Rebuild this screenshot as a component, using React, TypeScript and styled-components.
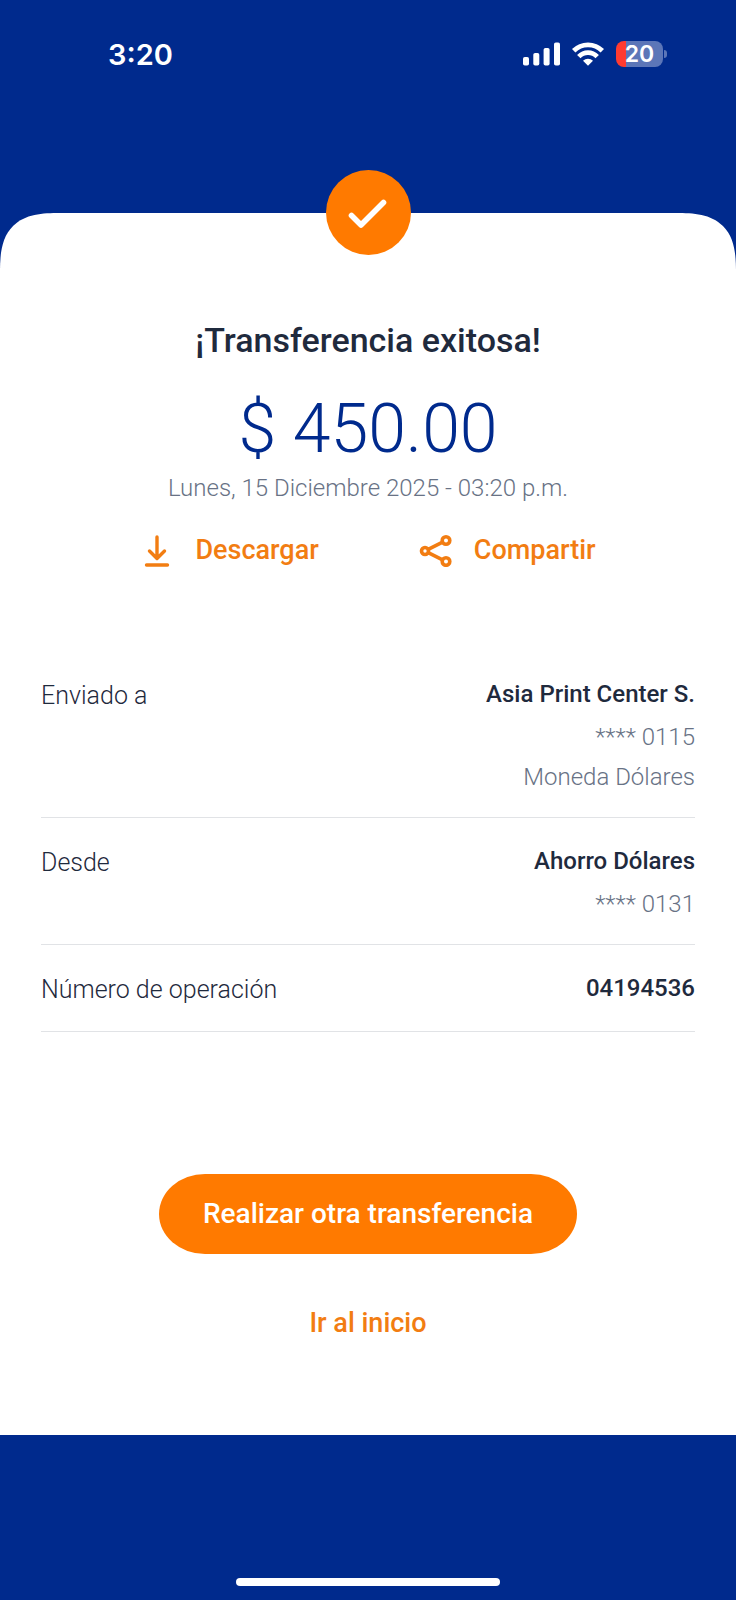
import React from "react";
import styled, { createGlobalStyle } from "styled-components";

const blue = "#002a8d";
const orange = "#ff7a00";
const link = "#f27d12";
const ink = "#1f2a3d";
const muted = "#687285";

const GlobalStyle = createGlobalStyle`
  *, *::before, *::after { box-sizing: border-box; }
  body {
    margin: 0;
    background: ${blue};
    font-family: Roboto, "Liberation Sans", sans-serif;
    color: ${ink};
  }
  h1, p, dl, dt, dd { margin: 0; }
`;

const Screen = styled.div`
  display: flex;
  flex-direction: column;
  min-height: 100vh;
  background: ${blue};
`;

const StatusBar = styled.header`
  display: flex;
  justify-content: space-between;
  align-items: flex-start;
  height: 213px;
  padding: 37px 69px 0 108px;
  font-family: Inter, "Liberation Sans", sans-serif;
  font-weight: 600;
  color: #fff;
`;

const Time = styled.time`
  font-size: 29px;
  line-height: 36px;
`;

const Indicators = styled.div`
  display: flex;
  align-items: center;
  gap: 12px;
  height: 34px;
`;

const Battery = styled.div`
  display: flex;
  align-items: center;
  gap: 1px;
`;

const BatteryBody = styled.div`
  width: 47px;
  height: 26px;
  border-radius: 8px;
  background: linear-gradient(90deg, #ff3b30 0 10px, #5c76b8 10px);
  font-size: 23px;
  line-height: 26px;
  text-align: center;
`;

const BatteryTip = styled.div`
  width: 3px;
  height: 8px;
  border-radius: 0 4px 4px 0;
  background: #5c76b8;
`;

const Card = styled.main`
  flex: 1;
  display: flex;
  flex-direction: column;
  align-items: center;
  padding: 0 41px 80px;
  border-radius: 44px 44px 0 0;
  background: #fff;

  @supports (corner-shape: superellipse(1.5)) {
    border-radius: 60px 60px 0 0;
    corner-shape: superellipse(1.5);
  }
`;

const Badge = styled.div`
  display: grid;
  place-items: center;
  width: 85px;
  height: 85px;
  margin-top: -43px;
  border-radius: 50%;
  background: ${orange};
`;

const Title = styled.h1`
  margin-top: 65px;
  font-size: 34px;
  font-weight: 500;
  line-height: 40px;
`;

const Amount = styled.p`
  margin-top: 31px;
  font-size: 68px;
  font-weight: 300;
  line-height: 76px;
  color: ${blue};
`;

const DateLine = styled.p`
  margin-top: 5px;
  font-size: 24px;
  font-weight: 300;
  line-height: 32px;
  color: ${muted};
`;

const Actions = styled.div`
  display: flex;
  gap: 100px;
  margin-top: 26px;
`;

const Action = styled.button`
  display: flex;
  align-items: center;
  gap: 21px;
  padding: 0;
  border: 0;
  background: none;
  font-family: inherit;
  font-size: 27px;
  font-weight: 500;
  line-height: 40px;
  color: ${link};
  cursor: pointer;
`;

const Details = styled.dl`
  width: 100%;
  margin-top: 81px;
`;

const Row = styled.div`
  display: flex;
  justify-content: space-between;
  padding: 23px 0 20px;
  border-bottom: 1px solid #e1e3e6;
`;

const Label = styled.dt`
  font-size: 25px;
  font-weight: 300;
  line-height: 43px;
`;

const Values = styled.dd`
  text-align: right;
`;

const Name = styled.p`
  font-size: 24px;
  font-weight: 500;
  line-height: 40px;
`;

const Extras = styled.div`
  margin-top: 3px;
  font-size: 24px;
  font-weight: 300;
  line-height: 40px;
  color: ${muted};
`;

const Primary = styled.button`
  height: 80px;
  margin-top: 142px;
  padding: 0 44px;
  border: 0;
  border-radius: 46px / 40px;
  background: ${orange};
  font-family: inherit;
  font-size: 28px;
  font-weight: 500;
  line-height: 40px;
  color: #fff;
  cursor: pointer;
`;

const HomeLink = styled.a`
  margin-top: 49px;
  font-size: 27px;
  font-weight: 500;
  line-height: 40px;
  color: ${link};
  text-decoration: none;
`;

const Footer = styled.footer`
  display: flex;
  justify-content: center;
  align-items: flex-end;
  height: 165px;
  padding-bottom: 14px;
`;

const HomeBar = styled.div`
  width: 36%;
  height: 8px;
  border-radius: 4px;
  background: #fff;
`;

const SignalIcon = () => (
  <svg width="37" height="24" viewBox="0 0 37 24" fill="#fff" aria-hidden="true">
    <rect x="0" y="15" width="6" height="8.500" rx="1.800" />
    <rect x="10.300" y="11" width="6" height="12.500" rx="1.800" />
    <rect x="20.600" y="6" width="6" height="17.500" rx="1.800" />
    <rect x="31" y="0.500" width="6" height="23" rx="1.800" />
  </svg>
);

const WifiIcon = () => (
  <svg width="32" height="24" viewBox="0 0 32 24" fill="none" stroke="#fff" strokeWidth="4.800" aria-hidden="true">
    <path d="M1.700 8.800 C9.600 0.800 22.400 0.800 30.300 8.800" />
    <path d="M6.800 14.600 C12 9.300 20 9.300 25.200 14.600" />
    <path d="M16 23.800 L11 18.800 C13.800 16 18.200 16 21 18.800 Z" fill="#fff" stroke="none" />
  </svg>
);

const CheckIcon = () => (
  <svg width="42" height="34" viewBox="0 0 42 34" fill="none" stroke="#fff" strokeWidth="5.600" strokeLinecap="round" strokeLinejoin="round" aria-hidden="true">
    <path d="M4.500 19.500 L14 29 L36.500 6.500" />
  </svg>
);

const DownloadIcon = () => (
  <svg width="34" height="34" viewBox="-4 0 34 34" fill="none" stroke={link} strokeWidth="3.400" strokeLinecap="round" strokeLinejoin="round" aria-hidden="true">
    <path d="M13 4 V25 M5.500 18 L13 25.500 L20.500 18" />
    <path d="M2.500 32 H23.500" />
  </svg>
);

const ShareIcon = () => (
  <svg width="34" height="34" viewBox="-1 0 34 34" fill="none" stroke={link} strokeWidth="3.600" aria-hidden="true">
    <circle cx="5" cy="18" r="3.500" />
    <circle cx="26" cy="7.500" r="3.800" />
    <circle cx="26" cy="28.500" r="3.800" />
    <path d="M8.200 16.400 L22.600 9.200 M8.200 19.600 L22.600 26.800" />
  </svg>
);

const rows = [
  { label: "Enviado a", name: "Asia Print Center S.", extras: ["**** 0115", "Moneda Dólares"] },
  { label: "Desde", name: "Ahorro Dólares", extras: ["**** 0131"] },
  { label: "Número de operación", name: "04194536", extras: [] as string[] },
];

export default function App() {
  return (
    <Screen>
      <GlobalStyle />
      <StatusBar>
        <Time>3:20</Time>
        <Indicators>
          <SignalIcon />
          <WifiIcon />
          <Battery>
            <BatteryBody>20</BatteryBody>
            <BatteryTip />
          </Battery>
        </Indicators>
      </StatusBar>
      <Card>
        <Badge>
          <CheckIcon />
        </Badge>
        <Title>¡Transferencia exitosa!</Title>
        <Amount>$ 450.00</Amount>
        <DateLine>Lunes, 15 Diciembre 2025 - 03:20 p.m.</DateLine>
        <Actions>
          <Action type="button">
            <DownloadIcon />
            Descargar
          </Action>
          <Action type="button">
            <ShareIcon />
            Compartir
          </Action>
        </Actions>
        <Details>
          {rows.map((row) => (
            <Row key={row.label}>
              <Label>{row.label}</Label>
              <Values>
                <Name>{row.name}</Name>
                {row.extras.length > 0 && (
                  <Extras>
                    {row.extras.map((line) => (
                      <p key={line}>{line}</p>
                    ))}
                  </Extras>
                )}
              </Values>
            </Row>
          ))}
        </Details>
        <Primary type="button">Realizar otra transferencia</Primary>
        <HomeLink href="#inicio">Ir al inicio</HomeLink>
      </Card>
      <Footer>
        <HomeBar />
      </Footer>
    </Screen>
  );
}
